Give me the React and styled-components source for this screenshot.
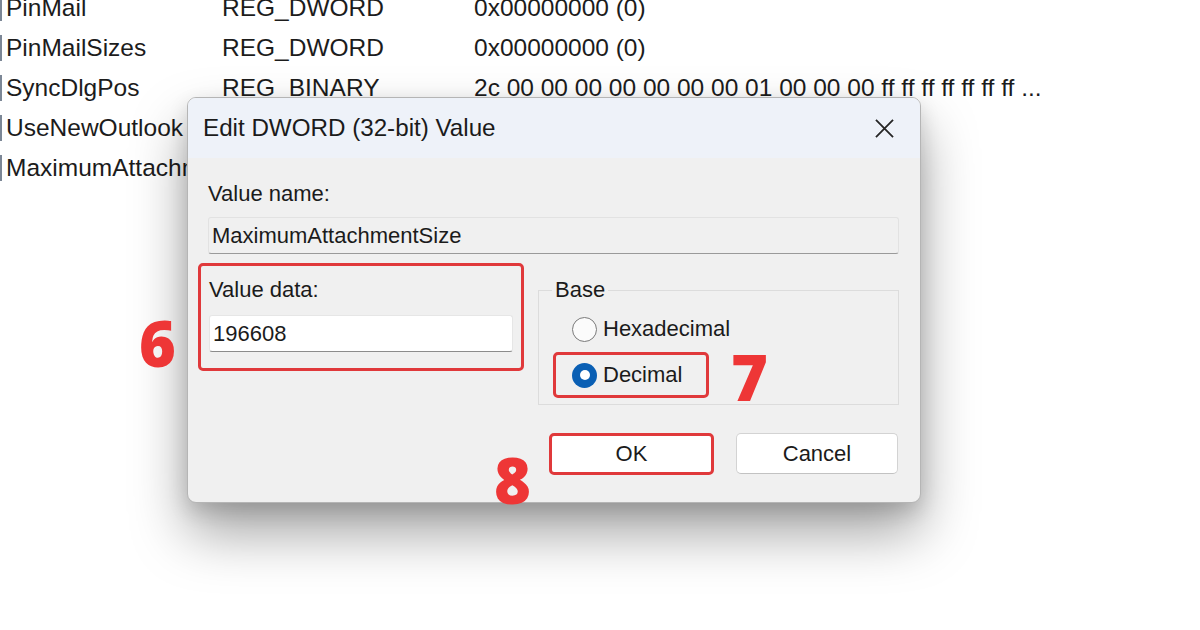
import React from "react"
import styled, { createGlobalStyle } from "styled-components"

const GlobalStyle = createGlobalStyle`
  html, body {
    margin: 0;
    padding: 0;
    background: #ffffff;
  }
  body {
    font-family: "Liberation Sans", Arial, sans-serif;
    color: #1b1b1b;
  }
`

const Page = styled.div`
  position: relative;
  width: 1200px;
  height: 630px;
  overflow: hidden;
  background: #ffffff;
`

const RegistryList = styled.div`
  margin-top: -12px;
  display: flex;
  flex-direction: column;
`

const RegistryRow = styled.div`
  display: grid;
  grid-template-columns: 222px 252px 1fr;
  height: 40px;
  align-items: center;
  font-size: 24.5px;
  color: #1c1c1c;
  white-space: nowrap;
`

const NameCell = styled.div`
  display: flex;
  align-items: center;
  gap: 4px;
  overflow: hidden;

  &::before {
    content: "";
    flex-shrink: 0;
    width: 2px;
    height: 26px;
    background: #7c8796;
  }
`

const Dialog = styled.div`
  position: absolute;
  left: 187px;
  top: 97px;
  width: 734px;
  height: 406px;
  box-sizing: border-box;
  border: 1px solid #b5b5b5;
  border-radius: 9px;
  background: #f0f0f0;
  overflow: hidden;
  box-shadow: 0 30px 55px rgba(0, 0, 0, 0.36), 0 8px 20px rgba(0, 0, 0, 0.14);
  display: flex;
  flex-direction: column;
`

const TitleBar = styled.div`
  height: 60px;
  flex-shrink: 0;
  background: #eef2f9;
  display: flex;
  align-items: center;
  justify-content: space-between;
  padding: 0 26px 0 15px;
  font-size: 24.2px;
  color: #1b1b1b;
`

const CloseIcon = () => (
  <svg width="19" height="19" viewBox="0 0 20 20">
    <path d="M1 1 L19 19 M19 1 L1 19" stroke="#262626" strokeWidth="1.9" fill="none" />
  </svg>
)

const Body = styled.div`
  padding: 24px 21px 0 20px;
  display: flex;
  flex-direction: column;
`

const Label = styled.div`
  font-size: 22px;
  line-height: 24px;
  color: #1b1b1b;
`

const TextField = styled.div`
  height: 37px;
  box-sizing: border-box;
  margin-top: ${p => p.$gap || 11}px;
  padding: 0 3px;
  display: flex;
  align-items: center;
  font-size: 22px;
  color: #1b1b1b;
  border-radius: 3px;
  background: ${p => (p.$readonly ? "#f0f0f0" : "#ffffff")};
  border: 1px solid ${p => (p.$readonly ? "#e2e2e2" : "#e6e6e6")};
  border-bottom: 1.5px solid ${p => (p.$readonly ? "#9a9a9a" : "#8c8c8c")};
`

const LowerRow = styled.div`
  margin-top: 9px;
  display: flex;
  justify-content: space-between;
  align-items: flex-start;
`

const DataBox = styled.div`
  margin-left: -10px;
  width: 326px;
  height: 108px;
  box-sizing: border-box;
  border: 3px solid #e0393b;
  border-radius: 5px;
  padding: 12px 8px 0 8px;
`

const GroupBox = styled.div`
  margin-top: 27px;
  width: 361px;
  height: 115px;
  box-sizing: border-box;
  border: 1px solid #dcdcdc;
  padding: 0 0 0 14px;
  display: flex;
  flex-direction: column;
  align-items: flex-start;
`

const Legend = styled.span`
  margin-top: -13px;
  margin-left: -1px;
  padding: 0 3px;
  background: #f0f0f0;
  font-size: 22px;
  line-height: 24px;
`

const RadioRow = styled.div`
  margin-top: ${p => p.$top || 0}px;
  height: 46px;
  box-sizing: border-box;
  border: 3px solid ${p => (p.$marked ? "#e0393b" : "transparent")};
  border-radius: 5px;
  padding: 0 24px 0 16px;
  display: flex;
  align-items: center;
  gap: 6px;
  font-size: 22px;
`

const RadioDot = styled.span`
  width: 25px;
  height: 25px;
  box-sizing: border-box;
  border-radius: 50%;
  flex-shrink: 0;
  display: flex;
  align-items: center;
  justify-content: center;
  border: ${p => (p.$checked ? "none" : "1.5px solid #7a7a7a")};
  background: ${p => (p.$checked ? "#0a5fb4" : "#fbfbfb")};

  &::after {
    content: "";
    display: ${p => (p.$checked ? "block" : "none")};
    width: 10px;
    height: 10px;
    border-radius: 50%;
    background: #ffffff;
  }
`

const ButtonRow = styled.div`
  margin-top: 28px;
  display: flex;
  justify-content: flex-end;
  gap: 22px;
  margin-right: 1px;
`

const Button = styled.div`
  width: ${p => p.$w}px;
  height: ${p => p.$h}px;
  box-sizing: border-box;
  background: #ffffff;
  border: ${p => (p.$marked ? "3px solid #e0393b" : "1px solid #d3d3d3")};
  border-bottom-color: ${p => (p.$marked ? "#e0393b" : "#c2c2c2")};
  border-radius: 5px;
  display: flex;
  align-items: center;
  justify-content: center;
  font-size: 22px;
  color: #1b1b1b;
`

const StepNumber = styled.div`
  position: absolute;
  left: ${p => p.$x}px;
  top: ${p => p.$y}px;
  font-family: "Open Sans", "Noto Sans", sans-serif;
  font-weight: 800;
  font-size: 63px;
  line-height: 63px;
  color: #ee3636;
`

const rows = [
  ["PinMail", "REG_DWORD", "0x00000000 (0)"],
  ["PinMailSizes", "REG_DWORD", "0x00000000 (0)"],
  ["SyncDlgPos", "REG_BINARY", "2c 00 00 00 00 00 00 00 01 00 00 00 ff ff ff ff ff ff ff ..."],
  ["UseNewOutlook", "", ""],
  ["MaximumAttachmentSize", "", ""],
]

export default function App() {
  return (
    <Page>
      <GlobalStyle />
      <RegistryList>
        {rows.map(([name, type, data]) => (
          <RegistryRow key={name}>
            <NameCell>{name}</NameCell>
            <div>{type}</div>
            <div>{data}</div>
          </RegistryRow>
        ))}
      </RegistryList>

      <Dialog>
        <TitleBar>
          <span>Edit DWORD (32-bit) Value</span>
          <CloseIcon />
        </TitleBar>
        <Body>
          <Label>Value name:</Label>
          <TextField $readonly>MaximumAttachmentSize</TextField>
          <LowerRow>
            <DataBox>
              <Label>Value data:</Label>
              <TextField $gap={13}>196608</TextField>
            </DataBox>
            <GroupBox>
              <Legend>Base</Legend>
              <RadioRow $top={4}>
                <RadioDot />
                Hexadecimal
              </RadioRow>
              <RadioRow $marked>
                <RadioDot $checked />
                Decimal
              </RadioRow>
            </GroupBox>
          </LowerRow>
          <ButtonRow>
            <Button $marked $w={165} $h={42}>OK</Button>
            <Button $w={162} $h={41}>Cancel</Button>
          </ButtonRow>
        </Body>
      </Dialog>

      <StepNumber $x={139} $y={311}>6</StepNumber>
      <StepNumber $x={731} $y={345}>7</StepNumber>
      <StepNumber $x={494} $y={448}>8</StepNumber>
    </Page>
  )
}
